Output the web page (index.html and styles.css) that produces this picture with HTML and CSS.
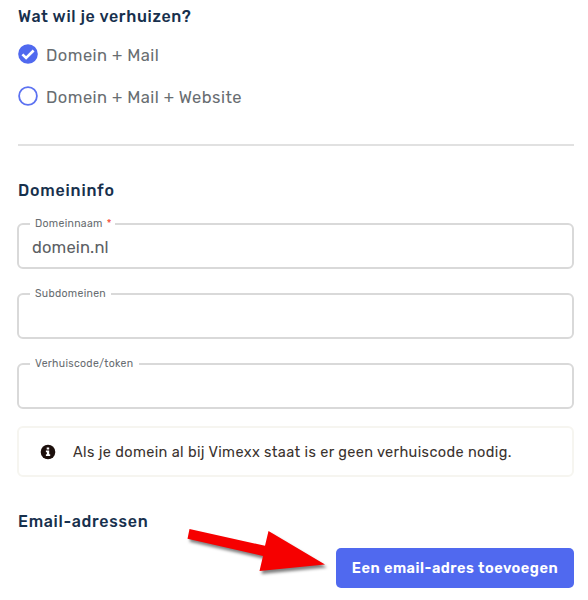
FILE: index.html
```html
<!DOCTYPE html>
<html lang="nl">
<head>
<meta charset="utf-8">
<title>Verhuizen</title>
<link rel="stylesheet" href="styles.css">
</head>
<body>
<main class="form">
  <h2 class="heading heading-move"><span>Wat wil je verhuizen?</span></h2>
  <div class="options">
    <div class="option">
      <svg class="radio" viewBox="0 0 20 20"><circle cx="10" cy="10" r="9.8" fill="#5069ef"/><path d="M4.4 10.3 8.1 14 15.6 6.5" fill="none" stroke="#fff" stroke-width="2.6"/></svg>
      <span>Domein + Mail</span>
    </div>
    <div class="option">
      <svg class="radio" viewBox="0 0 20 20"><circle cx="10" cy="10" r="8.9" fill="#fff" stroke="#5c72f1" stroke-width="1.8"/></svg>
      <span>Domein + Mail + Website</span>
    </div>
  </div>
  <hr class="divider">
  <h2 class="heading heading-domain"><span>Domeininfo</span></h2>
  <div class="fields">
    <fieldset class="field">
      <legend class="legend-name"><span>Domeinnaam</span><b class="required">*</b></legend>
      <div class="value"><span>domein.nl</span></div>
    </fieldset>
    <fieldset class="field">
      <legend class="legend-sub"><span>Subdomeinen</span></legend>
    </fieldset>
    <fieldset class="field">
      <legend class="legend-token"><span>Verhuiscode/token</span></legend>
    </fieldset>
  </div>
  <div class="notice">
    <svg class="info" viewBox="0 0 16 16"><circle cx="8" cy="8" r="7.3" fill="#1c0f0c"/><path d="M6.7 3.4h2.5v2.1H6.7zM5.9 6.6h3.3v3.7h1v1.6H5.9v-1.6h1V8.2h-1z" fill="#fff"/></svg>
    <span>Als je domein al bij Vimexx staat is er geen verhuiscode nodig.</span>
  </div>
  <h2 class="heading heading-email"><span>Email-adressen</span></h2>
  <div class="actions">
    <button class="add" type="button"><span>Een email-adres toevoegen</span></button>
    <svg class="arrow" viewBox="0 0 150 60"><path d="M2.5 9 78 25.8 81.5 11 138 44.5 72.5 51 76 36 .5 18.7Z" fill="#f60000"/></svg>
  </div>
</main>
</body>
</html>
```

FILE: styles.css
```css
* { box-sizing: border-box; }
body {
  margin: 0;
  background: #fff;
  color: #686d71;
  font-family: Rubik, Roboto, "Liberation Sans", sans-serif;
}
.form { padding: 7px 14px 0 17px; width: 588px; height: 600px; overflow: hidden; }
.heading {
  margin: 0;
  padding-left: 1px;
  color: #17304d;
  font-size: 16px;
  line-height: 20px;
  font-weight: 500;
  white-space: nowrap;
}
.heading-move { letter-spacing: .66px; }
.heading-domain { margin-top: 35px; letter-spacing: .8px; }
.heading-email { margin-top: 35px; letter-spacing: .7px; }
.options { display: flex; flex-direction: column; gap: 22px; margin-top: 17px; }
.option { display: flex; align-items: center; gap: 8px; height: 20px; font-size: 16.5px; line-height: 20px; letter-spacing: .46px; white-space: nowrap; }
.option span { padding-top: 3px; }
.radio { width: 20px; height: 20px; margin-left: 1px; flex: none; }
.divider { height: 2px; margin: 38px 0 0 1px; border: 0; background: #e1e1e1; }
.fields { display: flex; flex-direction: column; gap: 19px; margin-top: 17px; }
.field {
  margin: 0;
  min-width: 0;
  height: 51px;
  padding: 0 11px;
  border: 2px solid #d9d9d9;
  border-radius: 6px;
}
.field legend { height: 12px; padding: 0 5px; font-size: 10.5px; line-height: 12px; letter-spacing: .3px; white-space: nowrap; }
.legend-name { width: 85px; }
.legend-sub { width: 81px; }
.legend-token { width: 109px; }
.required { margin-left: 4px; color: #f4503c; font-weight: 400; }
.value { padding: 8px 0 0 2px; color: #5c6064; font-size: 16.5px; line-height: 20px; letter-spacing: .15px; }
.notice {
  display: flex;
  align-items: center;
  gap: 17px;
  height: 51px;
  margin-top: 17px;
  padding-left: 21px;
  border: 2px solid #f6f5f0;
  border-radius: 6px;
  color: #3a322e;
  font-size: 14.5px;
  letter-spacing: .38px;
  white-space: nowrap;
}
.info { width: 16px; height: 16px; flex: none; }
.actions { position: relative; display: flex; justify-content: flex-end; margin-top: 16px; }
.add {
  width: 238px;
  height: 40px;
  padding: 1px 0 0;
  border: 0;
  border-radius: 5px;
  background: #5069ef;
  color: #fff;
  font: 600 14.5px/39px Rubik, Roboto, "Liberation Sans", sans-serif;
  letter-spacing: .52px;
  white-space: nowrap;
}
.arrow {
  position: absolute;
  left: 170px;
  top: -28px;
  width: 150px;
  height: 60px;
  filter: drop-shadow(2px 3px 1.5px rgba(0, 0, 0, .5));
}
```
